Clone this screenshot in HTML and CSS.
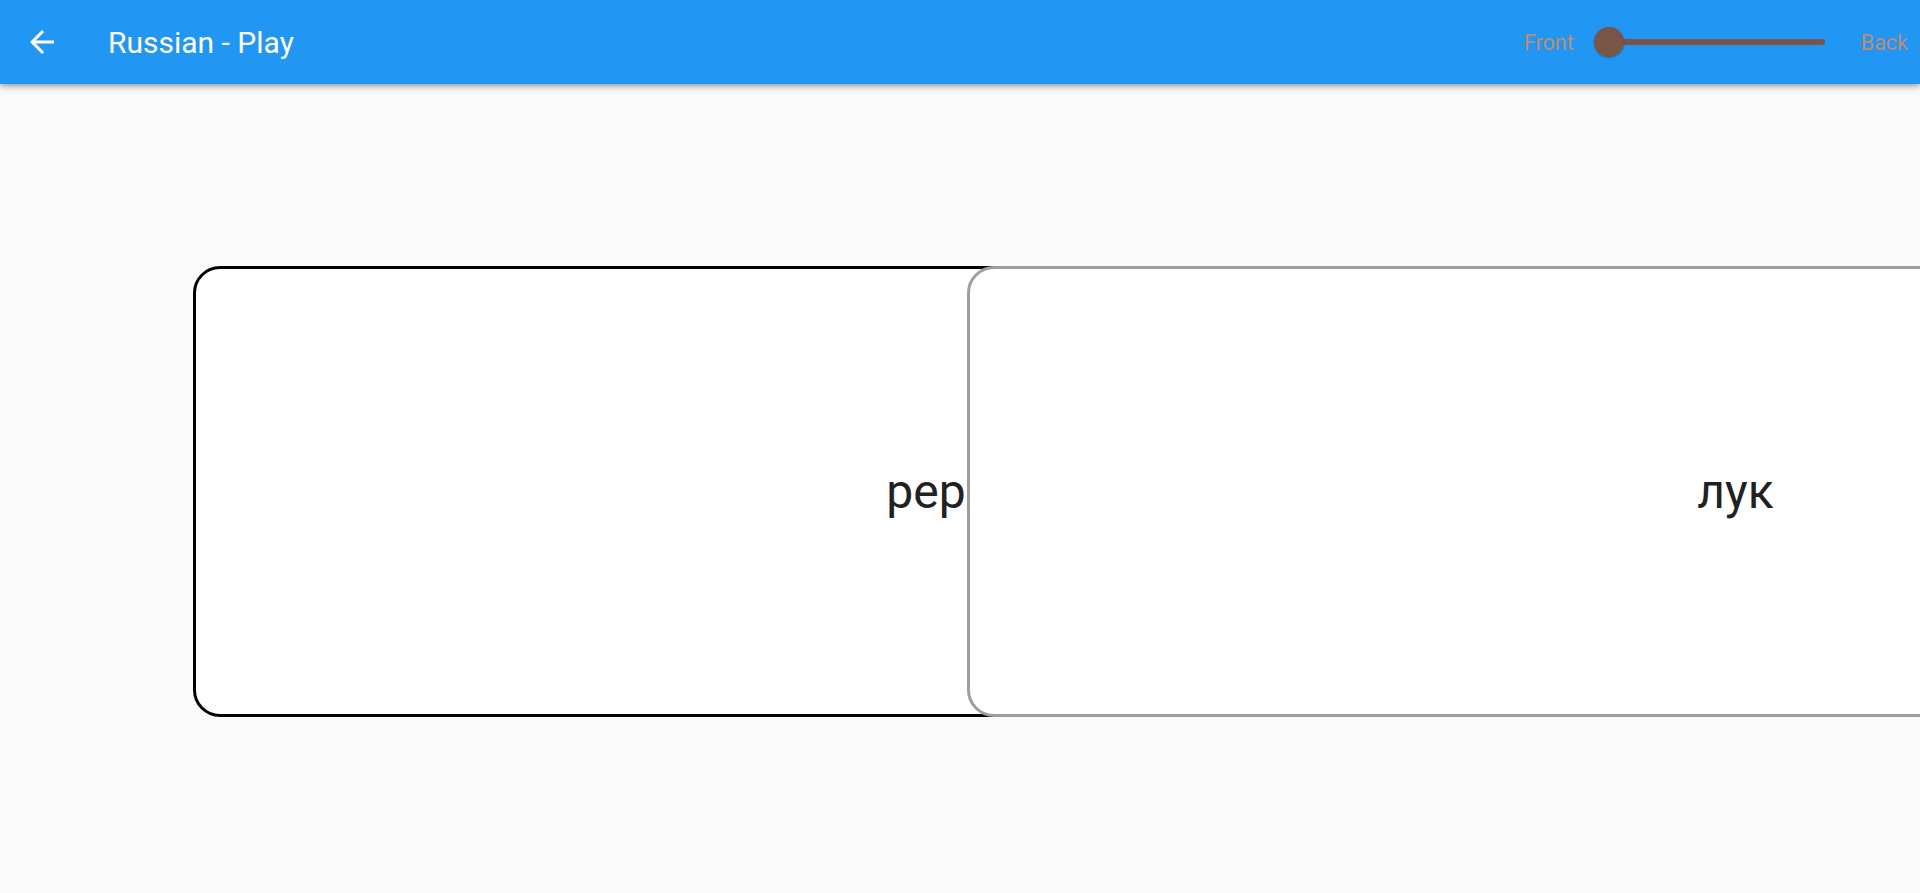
FILE: index.html
```html
<!DOCTYPE html>
<html lang="ru">
<head>
<meta charset="utf-8">
<title>Russian - Play</title>
<link rel="stylesheet" href="styles.css">
</head>
<body>
<header class="appbar">
  <button class="back-btn" aria-label="Back">
    <svg viewBox="0 0 24 24" width="36" height="36"><path fill="#fff" d="M20 11H7.83l5.59-5.59L12 4l-8 8 8 8 1.41-1.41L7.83 13H20v-2z"/></svg>
  </button>
  <h1 class="title">Russian - Play</h1>
  <div class="actions">
    <span class="side-label">Front</span>
    <div class="slider">
      <div class="track"></div>
      <div class="thumb"></div>
    </div>
    <span class="side-label back-label">Back</span>
  </div>
</header>
<main class="stage">
  <div class="deck">
    <div class="card card-back"><span class="word">рер</span></div>
    <div class="card card-front"><span class="word">лук</span></div>
  </div>
</main>
</body>
</html>
```

FILE: styles.css
```css
html, body {
  margin: 0;
  padding: 0;
  height: 100%;
}
body {
  background: #fafafa;
  font-family: Roboto, "Noto Sans", "Liberation Sans", sans-serif;
  display: flex;
  flex-direction: column;
  overflow: hidden;
}
.appbar {
  height: 84px;
  flex: 0 0 84px;
  background: #2196f3;
  display: flex;
  align-items: center;
  box-shadow: 0 2px 4px -1px rgba(0,0,0,.2), 0 4px 5px 0 rgba(0,0,0,.14), 0 1px 10px 0 rgba(0,0,0,.12);
  position: relative;
  z-index: 2;
}
.back-btn {
  margin-left: 24px;
  width: 36px;
  height: 36px;
  padding: 0;
  border: 0;
  background: none;
  display: flex;
}
.title {
  margin: 0 0 0 48px;
  font-size: 30px;
  font-weight: 400;
  color: #fff;
  flex: 1;
  letter-spacing: 0;
}
.actions {
  display: flex;
  align-items: center;
  padding-right: 12px;
}
.side-label {
  font-size: 21.5px;
  color: #bd8b76;
}
.slider {
  margin-left: 32px;
  width: 219px;
  height: 30px;
  display: flex;
  align-items: center;
  position: relative;
}
.track {
  width: 100%;
  height: 6px;
  border-radius: 3px;
  background: #795548;
}
.thumb {
  position: absolute;
  left: -12px;
  top: 0;
  width: 30px;
  height: 30px;
  border-radius: 50%;
  background: #795548;
  box-shadow: 0 1px 2px rgba(0,0,0,.25);
}
.back-label {
  margin-left: 36px;
}
.stage {
  flex: 1;
  overflow: hidden;
  padding-top: 182px;
}
.deck {
  display: grid;
  width: 3000px;
}
.card {
  grid-area: 1 / 1;
  width: 1509px;
  height: 451px;
  box-sizing: border-box;
  border-radius: 27px;
  background: #fff;
  display: flex;
  align-items: center;
  justify-content: center;
}
.card-back {
  margin-left: 193px;
  border: 3px solid #000;
  padding-right: 43px;
}
.card-front {
  margin-left: 967px;
  border: 3px solid #9e9e9e;
  padding-left: 28px;
}
.word {
  font-size: 48px;
  color: #212121;
}
```
